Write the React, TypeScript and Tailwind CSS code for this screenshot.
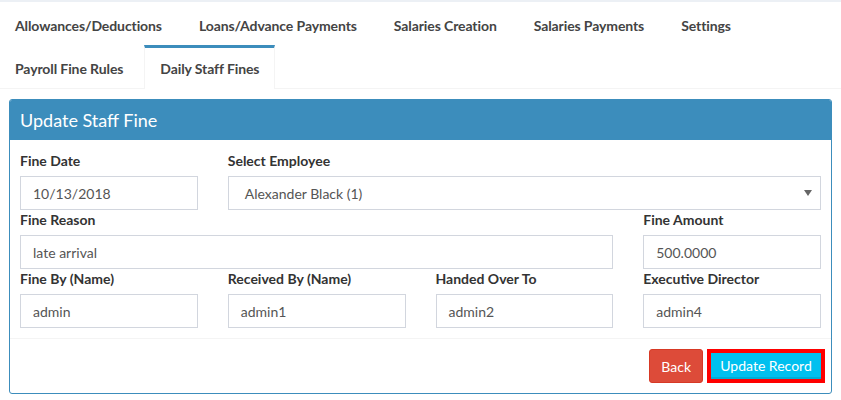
import React from "react";

const Tab = ({ label, active }: { label: string; active?: boolean }) => (
  <div
    className={
      "px-[15px] pt-[11px] pb-[9px] leading-[20px] text-[14px] tracking-[-0.1px] font-bold text-[#444] border-t-[3px] border-x mr-[5px] " +
      (active
        ? "border-t-[#3c8dbc] border-x-[#f4f4f4] bg-white mb-[-1px] relative"
        : "border-t-transparent border-x-transparent")
    }
  >
    {label}
  </div>
);

const Field = ({ label, value, span }: { label: string; value: string; span?: string }) => (
  <div className={span ?? ""}>
    <div className="text-[14px] leading-[20px] font-bold text-[#333] mb-[5px]">{label}</div>
    <div className="h-[34px] border border-[#d2d6de] px-[12px] flex items-center text-[14px] text-[#555]">
      {value}
    </div>
  </div>
);

export default function App() {
  return (
    <div className="w-[841px] h-[400px] bg-white overflow-hidden font-['Lato','Liberation_Sans',sans-serif]">
      <div className="h-[2px] bg-[#ecf0f5]" />
      <div className="border-b border-[#f4f4f4] -ml-px">
        <div className="flex">
          <Tab label="Allowances/Deductions" />
          <Tab label="Loans/Advance Payments" />
          <Tab label="Salaries Creation" />
          <Tab label="Salaries Payments" />
          <Tab label="Settings" />
        </div>
        <div className="flex">
          <Tab label="Payroll Fine Rules" />
          <Tab label="Daily Staff Fines" active />
        </div>
      </div>

      <div className="mt-[10px] mx-[9px] border border-[#3c8dbc] rounded-[3px] overflow-hidden">
        <div className="h-[40px] bg-[#3c8dbc] px-[10px] flex items-center text-[18px] text-white">
          Update Staff Fine
        </div>
        <div className="px-[10px] pt-[11px] pb-[10px] grid grid-cols-4 gap-x-[30px]">
          <Field label="Fine Date" value="10/13/2018" />
          <div className="col-span-3">
            <div className="text-[14px] leading-[20px] font-bold text-[#333] mb-[5px]">Select Employee</div>
            <div className="h-[34px] border border-[#d2d6de] pl-[16px] pr-[8px] flex items-center justify-between text-[14px] text-[#555]">
              <span>Alexander Black (1)</span>
              <svg width="8" height="6" viewBox="0 0 8 6">
                <path d="M0 0 L8 0 L4 6 Z" fill="#666" />
              </svg>
            </div>
          </div>
          <Field label="Fine Reason" value="late arrival" span="col-span-3" />
          <Field label="Fine Amount" value="500.0000" />
          <Field label="Fine By (Name)" value="admin" />
          <Field label="Received By (Name)" value="admin1" />
          <Field label="Handed Over To" value="admin2" />
          <Field label="Executive Director" value="admin4" />
        </div>
        <div className="border-t border-[#f4f4f4] py-[10px] pr-[6px] flex justify-end items-center">
          <button className="h-[34px] px-[11px] bg-[#dd4b39] border border-[#d73925] rounded-[3px] text-white text-[14px]">
            Back
          </button>
          <div className="ml-[4px] h-[34px] w-[118px] border-[4px] border-[#ff0000] flex">
            <div className="flex-1 bg-[#00c0ef] border-b-[2px] border-[#00acd6] flex items-center justify-center text-white text-[14px]">
              Update Record
            </div>
          </div>
        </div>
      </div>
    </div>
  );
}
